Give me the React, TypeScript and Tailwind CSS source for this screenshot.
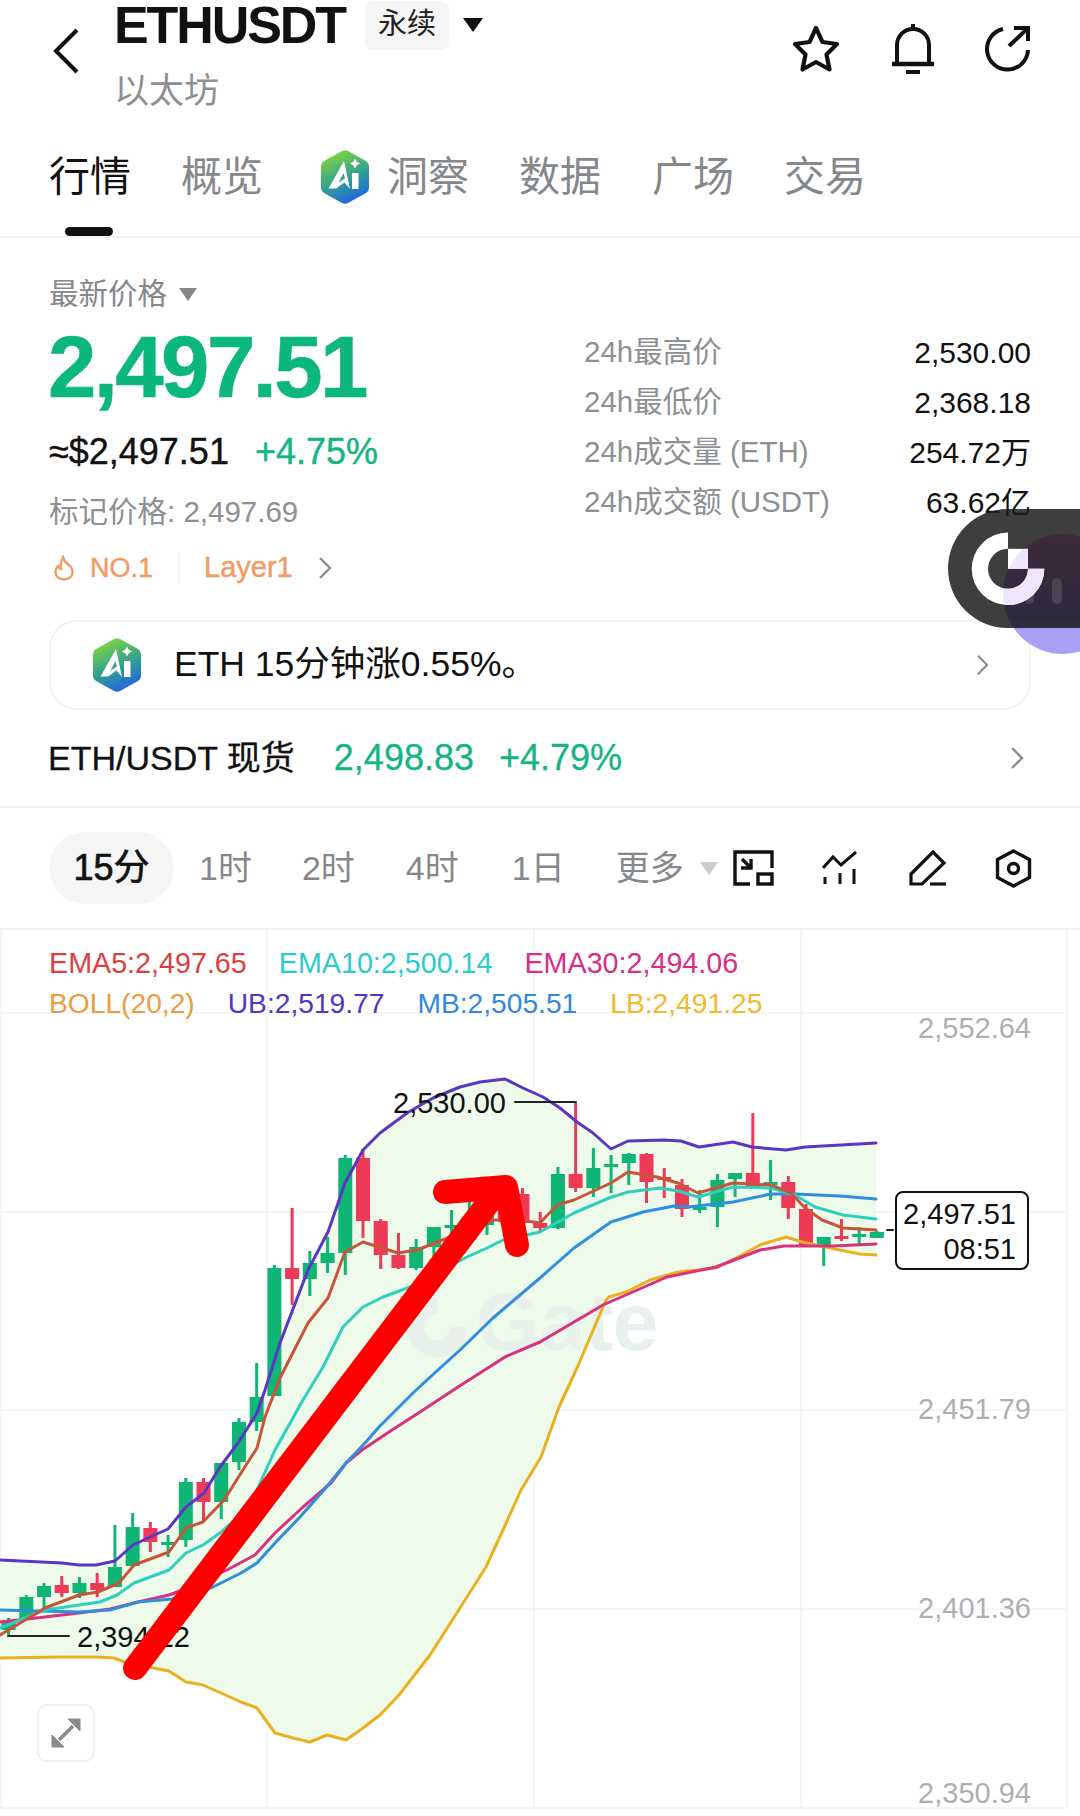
import React from 'react';

type Candle = [number, number, number, number, number];

const G = '#0fb574';
const R = '#ee3a56';

// up flag (1 green, 0 red), high, body top, body bottom, low
const CANDLES: Candle[] = [
  [1, 1618, 1622, 1630, 1635], [1, 1595, 1597, 1620, 1620], [1, 1583, 1586, 1597, 1608], [0, 1576, 1585, 1593, 1597],
  [1, 1577, 1583, 1593, 1598], [0, 1573, 1583, 1590, 1597], [1, 1525, 1567, 1587, 1587], [1, 1513, 1527, 1566, 1566],
  [0, 1522, 1528, 1542, 1552], [1, 1535, 1542, 1544, 1557], [1, 1478, 1482, 1540, 1547], [0, 1478, 1482, 1502, 1522],
  [1, 1463, 1463, 1502, 1519], [1, 1418, 1422, 1462, 1470], [1, 1363, 1397, 1422, 1431], [1, 1265, 1268, 1396, 1396],
  [0, 1208, 1268, 1279, 1305], [1, 1251, 1263, 1279, 1296], [1, 1237, 1253, 1263, 1273], [1, 1155, 1158, 1253, 1275],
  [0, 1149, 1158, 1221, 1238], [0, 1219, 1221, 1255, 1269], [0, 1233, 1255, 1268, 1269], [1, 1239, 1247, 1268, 1270],
  [1, 1227, 1227, 1247, 1257], [1, 1210, 1225, 1227, 1237], [1, 1200, 1218, 1240, 1245], [1, 1195, 1200, 1225, 1235],
  [0, 1190, 1196, 1222, 1226], [0, 1188, 1194, 1223, 1223], [0, 1212, 1223, 1228, 1232], [1, 1167, 1174, 1228, 1229],
  [0, 1103, 1174, 1188, 1192], [1, 1148, 1168, 1188, 1197], [1, 1155, 1164, 1167, 1193], [1, 1153, 1154, 1163, 1185],
  [0, 1153, 1154, 1182, 1203], [0, 1168, 1177, 1180, 1198], [0, 1179, 1185, 1209, 1217], [1, 1190, 1207, 1209, 1213],
  [1, 1174, 1180, 1207, 1227], [1, 1173, 1173, 1179, 1197], [0, 1113, 1173, 1188, 1188], [1, 1160, 1182, 1185, 1200],
  [0, 1176, 1182, 1208, 1219], [0, 1204, 1209, 1245, 1245], [1, 1237, 1237, 1245, 1266], [0, 1219, 1236, 1239, 1241],
  [1, 1227, 1234, 1236, 1245], [1, 1231, 1232, 1238, 1238],
];

const UB = '0,1560 62,1563 79,1565 96,1565 115,1561 133,1545 150,1537 168,1529 186,1507 204,1493 220,1467 238,1443 257,1413 265,1390 280,1343 308,1270 328,1232 345,1183 363,1150 380,1133 407,1113 433,1098 460,1087 480,1082 505,1079 523,1088 543,1097 560,1108 577,1122 593,1133 611,1149 628,1141 664,1140 681,1141 699,1147 733,1142 752,1147 786,1150 805,1147 876,1143';
const LB = '0,1658 62,1657 96,1657 114,1658 127,1663 169,1671 186,1682 203,1685 241,1702 257,1708 275,1733 293,1738 310,1742 327,1735 346,1740 363,1728 380,1715 399,1695 430,1655 460,1608 486,1567 503,1530 521,1490 541,1457 559,1407 577,1368 606,1300 609,1297 626,1292 650,1280 678,1272 716,1268 736,1258 760,1245 786,1237 802,1242 840,1250 860,1254 876,1255';
const MB = '0,1610 79,1612 110,1610 138,1602 172,1599 213,1587 241,1573 257,1563 275,1543 300,1517 324,1490 346,1463 365,1443 379,1427 413,1393 427,1380 460,1350 493,1318 540,1278 574,1248 611,1222 643,1212 674,1206 688,1207 733,1202 771,1194 795,1194 840,1196 876,1199';
const EMA30 = '0,1622 45,1617 79,1613 110,1609 138,1602 169,1595 183,1590 227,1570 255,1555 275,1533 303,1507 331,1483 346,1463 362,1450 389,1432 420,1412 458,1387 505,1357 540,1342 603,1305 667,1277 716,1267 760,1250 784,1246 833,1246 876,1244';
const EMA5 = '0,1635 17,1625 45,1608 79,1595 98,1592 119,1583 134,1565 169,1552 186,1528 203,1522 224,1500 241,1473 257,1448 265,1417 280,1378 308,1323 328,1298 345,1252 363,1242 398,1253 417,1250 450,1237 493,1220 520,1220 540,1223 557,1205 574,1200 611,1183 628,1172 657,1177 678,1183 698,1193 733,1183 771,1185 791,1193 805,1208 822,1220 843,1228 876,1230';
const EMA10 = '0,1628 45,1610 79,1605 100,1602 117,1595 134,1583 169,1570 186,1553 203,1545 220,1533 238,1517 257,1490 275,1450 303,1400 323,1367 343,1327 363,1307 383,1297 410,1287 467,1257 487,1248 503,1240 540,1232 574,1213 609,1198 628,1192 660,1188 678,1191 698,1197 733,1187 771,1188 795,1195 815,1207 843,1215 876,1219';

const bandFill = `${UB} ${LB.split(' ').reverse().join(' ')}`;

const AiLogo = ({ id }: { id: string }) => (
  <svg width="50" height="56" viewBox="0 0 50 56" fill="none">
    <defs>
      <linearGradient id={id} x1="12" y1="4" x2="34" y2="54" gradientUnits="userSpaceOnUse">
        <stop offset="0" stopColor="#7fd43f" />
        <stop offset="0.55" stopColor="#2f9f93" />
        <stop offset="1" stopColor="#2160ea" />
      </linearGradient>
    </defs>
    <path d="M22 2 Q25 0.500 28 2 L46 12 Q49 14 49 17 V39 Q49 42 46 44 L28 54 Q25 55.500 22 54 L4 44 Q1 42 1 39 V17 Q1 14 4 12 Z" fill={`url(#${id})`} />
    <path d="M24 12 L30 40 L24.500 33.500 L16 39.500 H8.500 Z M23.500 24 L18.500 33.500 L25 29.500 Z" fill="#fff" fillRule="evenodd" />
    <path d="M32 24 H38.500 V40 H32 Z" fill="#fff" />
    <path d="M35 9.500 L36.800 12.700 L40 14.500 L36.800 16.300 L35 19.500 L33.200 16.300 L30 14.500 L33.200 12.700 Z" fill="#fff" />
  </svg>
);

const Chevron = ({ className }: { className: string }) => (
  <svg className={className} viewBox="0 0 14 24" fill="none" stroke="#8a8c8f" strokeWidth="2.4">
    <path d="M2 2 L12 12 L2 22" />
  </svg>
);

const Header = () => (
  <header className="flex h-[120px] items-start">
    <svg className="ml-[53px] mt-[28px] h-[46px] w-[26px]" viewBox="0 0 26 46" fill="none" stroke="#111" strokeWidth="4">
      <path d="M24 2 L3 23 L24 44" />
    </svg>
    <div className="ml-[35px]">
      <div className="flex h-[50px] items-center">
        <span className="text-[52px] font-bold leading-[50px] tracking-[-0.04em] text-[#111]">ETHUSDT</span>
        <span className="ml-[20px] flex h-[49px] w-[84px] items-center justify-center rounded-[8px] bg-[#f5f5f5] text-[29px] text-[#222]">永续</span>
        <span className="ml-[14px] h-0 w-0 border-x-[10px] border-t-[14px] border-x-transparent border-t-[#111]" />
      </div>
      <div className="mt-[21px] text-[35px] leading-[40px] text-[#8d9093]">以太坊</div>
    </div>
    <div className="ml-auto mr-[49px] mt-[24px] flex items-start gap-[50px]">
      <svg width="50" height="50" viewBox="0 0 50 50" fill="none" stroke="#111" strokeWidth="4.2" strokeLinejoin="round">
        <path d="M25 4 L31.500 18 L46 20 L35.500 30.500 L38.500 45.500 L25 38 L11.500 45.500 L14.500 30.500 L4 20 L18.500 18 Z" />
      </svg>
      <svg width="44" height="50" viewBox="0 0 44 50" fill="none" stroke="#111" strokeWidth="4">
        <path d="M22 0 V5" />
        <path d="M6 40 V21 A16 16 0 0 1 38 21 V40" />
        <path d="M1 40 H43" strokeWidth="4.5" />
        <path d="M15 48 H29" strokeWidth="4" />
      </svg>
      <svg width="46" height="48" viewBox="0 0 46 48" fill="none" stroke="#111" strokeWidth="4">
        <path d="M18 5 A20.5 20.5 0 1 0 43 26" />
        <path d="M24 22 L42 5" />
        <path d="M29 4 H43 V17" />
      </svg>
    </div>
  </header>
);

const Tabs = () => (
  <nav className="relative flex h-[118px] items-start border-b-2 border-[#f2f2f2] pl-[49px] pt-[29px] text-[41px] leading-[56px] text-[#85888b]">
    <span className="text-[#111]">行情</span>
    <span className="ml-[50px]">概览</span>
    <span className="ml-[57px] flex items-center">
      <AiLogo id="ai-tab" />
      <span className="ml-[17px]">洞察</span>
    </span>
    <span className="ml-[50px]">数据</span>
    <span className="ml-[51px]">广场</span>
    <span className="ml-[50px]">交易</span>
    <span className="absolute bottom-0 left-[65px] h-[9px] w-[48px] rounded-full bg-[#111]" />
  </nav>
);

const STATS = [
  ['24h最高价', '2,530.00'],
  ['24h最低价', '2,368.18'],
  ['24h成交量 (ETH)', '254.72万'],
  ['24h成交额 (USDT)', '63.62亿'],
];

const Overview = () => (
  <section className="border-b-2 border-[#f2f2f2] px-[49px] pb-[26px] pt-[39px]">
    <div className="flex justify-between">
      <div>
        <div className="flex h-[34px] items-center text-[29.5px] text-[#85888b]">
          最新价格
          <span className="ml-[12px] h-0 w-0 border-x-[9px] border-t-[13px] border-x-transparent border-t-[#85888b]" />
        </div>
        <div className="-ml-[1px] mt-[9px] h-[94px] text-[87px] font-bold leading-[94px] tracking-[-0.03em] text-[#0bb77a] [-webkit-text-stroke:0.6px_#0bb77a]">2,497.51</div>
        <div className="mt-[16px] flex h-[44px] items-center text-[36px] [-webkit-text-stroke:0.4px_currentColor]">
          <span className="text-[#111]">≈$2,497.51</span>
          <span className="ml-[26px] text-[#14b582]">+4.75%</span>
        </div>
        <div className="mt-[18px] h-[40px] text-[29.5px] leading-[40px] text-[#8d9093]">标记价格: 2,497.69</div>
        <div className="mt-[18px] flex h-[36px] items-center text-[#f19a62] [-webkit-text-stroke:0.4px_#f19a62]">
          <svg className="ml-[4px]" width="22" height="26" viewBox="0 0 22 26" fill="none" stroke="#f19a62" strokeWidth="2.4">
            <path d="M10 2 C11 7 14 8 17 11 C21 15 21 24 11 24.500 C1 24 1 15 5 11 C6 13 7 14 8 14 C7 10 8 6 10 2 Z" />
          </svg>
          <span className="ml-[15px] text-[27px]">NO.1</span>
          <span className="ml-[25px] h-[30px] w-[2px] bg-[#f2f2f2]" />
          <span className="ml-[24px] text-[29px]">Layer1</span>
          <Chevron className="ml-[25px] h-[24px] w-[14px]" />
        </div>
      </div>
      <div className="w-[447px] pt-[50px]">
        {STATS.map(([label, value]) => (
          <div key={label} className="flex h-[50px] items-center justify-between">
            <span className="text-[29.5px] text-[#8d9093]">{label}</span>
            <span className="text-[30px] text-[#111]">{value}</span>
          </div>
        ))}
      </div>
    </div>

    <div className="mt-[34px] flex h-[90px] items-center rounded-[28px] border-2 border-[#f2f2f2] pl-[41px] pr-[40px]">
      <AiLogo id="ai-banner" />
      <span className="ml-[32px] text-[35.5px] text-[#111]">ETH 15分钟涨0.55%。</span>
      <Chevron className="ml-auto h-[22px] w-[13px]" />
    </div>

    <div className="-ml-[1px] mt-[26px] flex h-[44px] items-center text-[34px] [-webkit-text-stroke:0.3px_currentColor]">
      <span className="text-[#111]">ETH/USDT 现货</span>
      <span className="ml-[39px] text-[36px] text-[#14b582]">2,498.83</span>
      <span className="ml-[25px] text-[36px] text-[#14b582]">+4.79%</span>
      <Chevron className="ml-auto mr-[7px] h-[24px] w-[14px]" />
    </div>
  </section>
);

const Toolbar = () => (
  <div className="flex h-[122px] items-center border-b-2 border-[#f2f2f2] pl-[49px] pr-[48px] text-[34px] text-[#85888b]">
    <span className="flex h-[72px] w-[125px] items-center justify-center rounded-full bg-[#f5f5f5] text-[36px] text-[#111] [-webkit-text-stroke:0.7px_#111]">15分</span>
    <span className="ml-[25px]">1时</span>
    <span className="ml-[50px]">2时</span>
    <span className="ml-[51px]">4时</span>
    <span className="ml-[53px]">1日</span>
    <span className="ml-[51px]">更多</span>
    <span className="ml-[16px] h-0 w-0 border-x-[9px] border-t-[13px] border-x-transparent border-t-[#c9cbcd]" />
    <div className="ml-auto flex items-center gap-[48.5px]">
      <svg width="41" height="36" viewBox="0 0 41 36" fill="none" stroke="#111" strokeWidth="3.4">
        <path d="M39 18 V2 H2 V34 H17" />
        <rect x="25" y="24" width="14" height="10" />
        <path d="M9 9 L17 17" />
        <path d="M8 18 H18 V9" />
      </svg>
      <svg width="38" height="34" viewBox="0 0 38 34" fill="none" stroke="#111" strokeWidth="3">
        <path d="M1 17 L11 6 L19 14 L34 1" />
        <path d="M3 26 V33 M18 22 V33 M32 18 V33" />
      </svg>
      <svg width="38" height="36" viewBox="0 0 38 36" fill="none" stroke="#111" strokeWidth="3.2">
        <path d="M2 34 V24 L24 2 L35 13 L13 34 Z" />
        <path d="M21 34 H37" />
      </svg>
      <svg width="37" height="39" viewBox="0 0 37 39" fill="none" stroke="#111" strokeWidth="3.4">
        <path d="M18.500 2 L34.500 10.500 V28.500 L18.500 37 L2.500 28.500 V10.500 Z" />
        <circle cx="18.500" cy="19.500" r="5" />
      </svg>
    </div>
  </div>
);

const Chart = () => (
  <div className="relative h-[880px] text-[29px]">
    <svg className="absolute inset-0" width="1080" height="880" viewBox="0 930 1080 880" fill="none" strokeLinejoin="round" strokeLinecap="round">
      <path d="M1 1013 H1067 M1 1212 H1067 M1 1410 H1067 M1 1609 H1067 M0 1808 H1067 M1 930 V1808 M267 930 V1808 M534 930 V1808 M801 930 V1808 M1067 930 V1808" stroke="#f3f4f5" strokeWidth="1.6" />
      <polygon points={bandFill} fill="#eefbea" />
      <g fill="#eaf0ec">
        <path d="M437 1297 A30 30 0 1 0 467 1327 H450 A13 13 0 1 1 437 1314 Z" />
        <text x="476" y="1350" fontSize="82" fontWeight="700" fontFamily="'Liberation Sans', sans-serif">Gate</text>
      </g>
      {CANDLES.map(([up, high, top, bottom, low], i) => {
        const x = 8.6 + 17.72 * i;
        const color = up ? G : R;
        return (
          <g key={i} fill={color}>
            <rect x={x - 1.5} y={high} width="3" height={low - high} />
            <rect x={x - 7} y={top} width="14" height={Math.max(bottom - top, 3)} />
          </g>
        );
      })}
      <polyline points={LB} stroke="#eab020" strokeWidth="3" />
      <polyline points={EMA30} stroke="#d9307f" strokeWidth="3" />
      <polyline points={MB} stroke="#2f8fdc" strokeWidth="3" />
      <polyline points={EMA10} stroke="#2fcfc0" strokeWidth="3" />
      <polyline points={EMA5} stroke="#c8553a" strokeWidth="3" />
      <polyline points={UB} stroke="#5b36c4" strokeWidth="3" />
      <path d="M515 1102 H576" stroke="#222" strokeWidth="2" />
      <path d="M8 1636 H69" stroke="#222" strokeWidth="2" />
      <path d="M887 1230 H893" stroke="#222" strokeWidth="2" />
    </svg>

    <div className="absolute left-[49px] top-[14px] leading-[39.5px]">
      <div className="flex gap-[32px] text-[28.7px]">
        <span className="text-[#dc3f42]">EMA5:2,497.65</span>
        <span className="text-[#2ccbcb]">EMA10:2,500.14</span>
        <span className="text-[#da2e86]">EMA30:2,494.06</span>
      </div>
      <div className="flex gap-[33px] text-[28.2px]">
        <span className="text-[#ee9b3c]">BOLL(20,2)</span>
        <span className="text-[#5135c8]">UB:2,519.77</span>
        <span className="text-[#3088e0]">MB:2,505.51</span>
        <span className="text-[#f2b92d]">LB:2,491.25</span>
      </div>
    </div>

    <span className="absolute right-[49px] top-[78px] leading-[40px] text-[#adb0b3]">2,552.64</span>
    <span className="absolute right-[49px] top-[459px] leading-[40px] text-[#adb0b3]">2,451.79</span>
    <span className="absolute right-[49px] top-[658px] leading-[40px] text-[#adb0b3]">2,401.36</span>
    <span className="absolute right-[49px] top-[843px] leading-[40px] text-[#adb0b3]">2,350.94</span>

    <span className="absolute left-[393px] top-[153px] leading-[40px] text-[#111]">2,530.00</span>
    <span className="absolute left-[77px] top-[687px] leading-[40px] text-[#111]">2,394.12</span>

    <div className="absolute left-[895px] top-[261px] flex h-[79px] w-[134px] flex-col items-end justify-center rounded-[8px] border-2 border-[#111] bg-white pr-[11px] pt-[2px] leading-[35px] text-[#111]">
      <span>2,497.51</span>
      <span>08:51</span>
    </div>

    <svg className="absolute inset-0" width="1080" height="880" viewBox="0 930 1080 880" fill="none" stroke="#ff0000" strokeWidth="24" strokeLinecap="round" strokeLinejoin="round">
      <path d="M135 1668 L492 1198" />
      <path d="M445 1192 L506 1187 L517 1245" />
    </svg>

    <div className="absolute left-[37px] top-[774px] flex h-[58px] w-[58px] items-center justify-center rounded-[10px] border-2 border-[#f0f0f0] bg-white">
      <svg width="30" height="30" viewBox="0 0 30 30" fill="#8a8a8a" stroke="#8a8a8a">
        <path d="M17 1 H29 V13 Z" />
        <path d="M1 17 V29 H13 Z" />
        <path d="M8 22 L22 8" strokeWidth="3.5" />
      </svg>
    </div>
  </div>
);

const FloatingBall = () => (
  <>
    <div className="absolute left-[1003px] top-[534px] h-[120px] w-[120px] rounded-full bg-linear-to-b from-[#f778e3] via-[#9378ff] via-70% to-[#a99ff5] to-80%" />
    <div className="absolute left-[948px] top-[509px] h-[119px] w-[132px] rounded-l-full bg-[#1c1c1c]/85" />
    <svg className="absolute left-[948px] top-[509px]" width="132" height="119" viewBox="948 509 132 119">
      <defs>
        <clipPath id="ball-tint">
          <circle cx="1063" cy="594" r="60" />
        </clipPath>
      </defs>
      <rect x="1025" y="578" width="9" height="26" rx="4.500" fill="#4a4550" />
      <rect x="1052" y="578" width="10" height="26" rx="5" fill="#4a4550" />
      <g fill="#fff">
        <path d="M1008 532.500 A36.300 36.300 0 1 0 1044.300 568.800 H1028 A20 20 0 1 1 1008 548.800 Z" />
        <rect x="1008" y="548.800" width="20" height="20" />
      </g>
      <g fill="#efe6fd" clipPath="url(#ball-tint)">
        <path d="M1008 532.500 A36.300 36.300 0 1 0 1044.300 568.800 H1028 A20 20 0 1 1 1008 548.800 Z" />
        <rect x="1008" y="548.800" width="20" height="20" />
      </g>
    </svg>
  </>
);

const App = () => (
  <div className="relative h-[1816px] w-[1080px] overflow-hidden bg-white font-['Liberation_Sans','Noto_Sans_CJK_SC',sans-serif]">
    <Header />
    <Tabs />
    <Overview />
    <Toolbar />
    <Chart />
    <FloatingBall />
  </div>
);

export default App;
